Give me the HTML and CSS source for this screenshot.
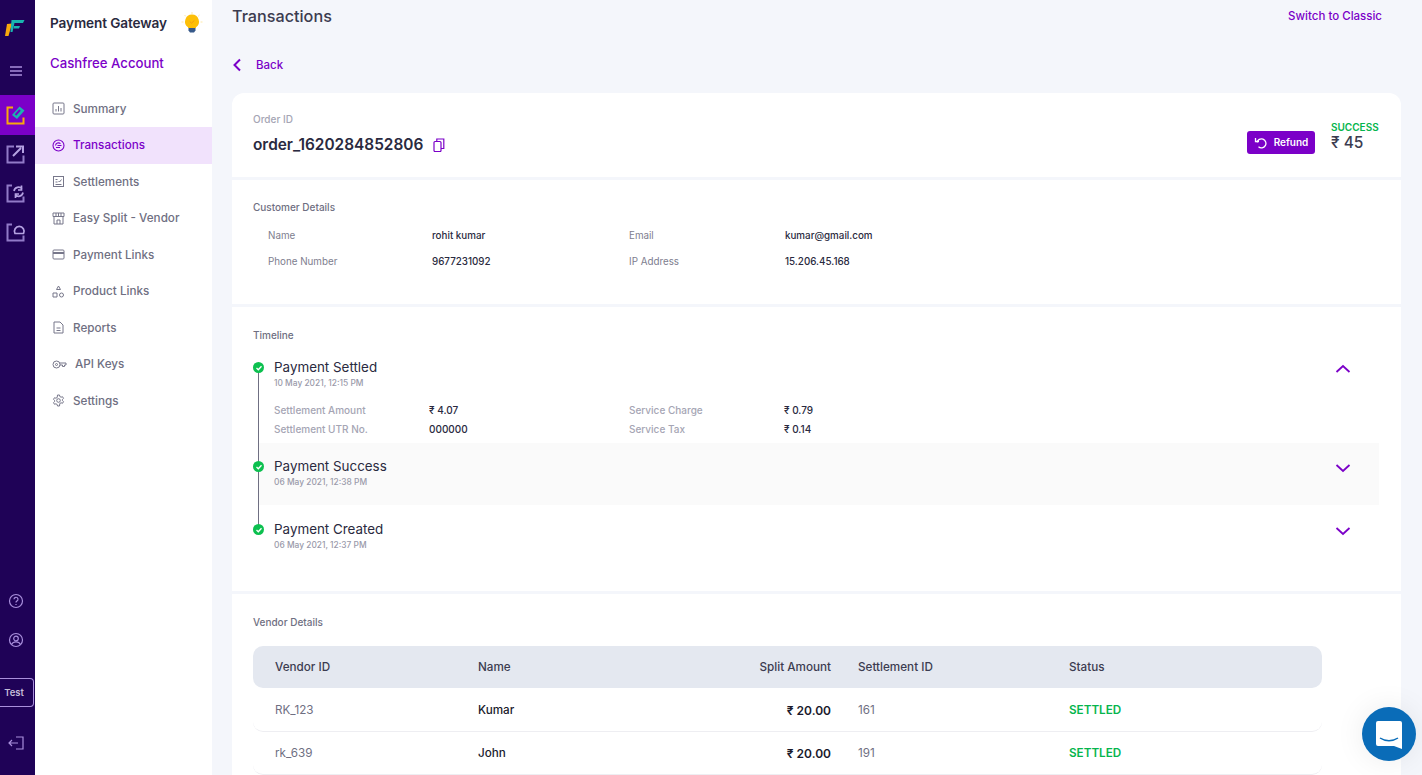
FILE: index.html
```html
<!DOCTYPE html>
<html lang="en">
<head>
<meta charset="utf-8">
<title>Transactions</title>
<link rel="stylesheet" href="styles.css">
</head>
<body>
<div class="app">
  <nav class="rail">
    <svg class="logo" width="22" height="20" viewBox="0 0 22 20"><path d="M0 18 2 6l5-.5L3.500 18z" fill="#f9a80d"/><path d="M6.500 2h13L18 5H9.500L7.500 14H5.500z" fill="#19b5b0"/><path d="M9 8h6l-1 2.500H8.500z" fill="#19b5b0"/></svg>
    <svg class="burger" width="14" height="12" viewBox="0 0 14 12"><path d="M1 2h12M1 6h12M1 10h12" stroke="#a98fdc" stroke-width="1.400"/></svg>
    <div class="rail-item active">
      <svg width="20" height="20" viewBox="0 0 20 20" fill="none"><path d="M7 2.500H1.500v16h16v-6" stroke="#f9a80d" stroke-width="2"/><path d="m6 10 7.500-8.500 5 4L11 14z" fill="#19b5b0"/><path d="m9.500 10 4.500-5" stroke="#7b00c8" stroke-width="2"/></svg>
    </div>
    <div class="rail-item">
      <svg width="20" height="20" viewBox="0 0 20 20" fill="none" stroke="#917ac8" stroke-width="2"><path d="M8 2.500H1.500v16h16v-7"/><path d="M7 12 15 4M10 2.500h7V9" stroke="#b5a2e2"/></svg>
    </div>
    <div class="rail-item">
      <svg width="20" height="20" viewBox="0 0 20 20" fill="none" stroke="#917ac8" stroke-width="2"><path d="M6 2.500H1.500v16h16v-5"/><path d="M8 8a4.500 4.500 0 0 1 8-2M17 9.500a4.500 4.500 0 0 1-8 2M15.500 2.500V7h-3.500M9.500 15v-4H13" stroke="#b5a2e2" stroke-width="1.700"/></svg>
    </div>
    <div class="rail-item">
      <svg width="20" height="20" viewBox="0 0 20 20" fill="none" stroke="#917ac8" stroke-width="2"><path d="M6 2.500H1.500v16h16v-5"/><path d="M9 11.500a4.800 4.800 0 1 1 8.500 0z" stroke="#b5a2e2" stroke-width="1.700"/></svg>
    </div>
    <div class="rail-bottom">
      <svg width="16" height="16" viewBox="0 0 16 16" fill="none" stroke="#a98fdc" stroke-width="1.200"><circle cx="8" cy="8" r="6.500"/><path d="M6 6.300a2 2 0 1 1 2.800 1.800c-.6.300-.8.700-.8 1.400M8 11v1"/></svg>
      <svg class="rail-user" width="16" height="16" viewBox="0 0 16 16" fill="none" stroke="#a98fdc" stroke-width="1.200"><circle cx="8" cy="8" r="6.500"/><circle cx="8" cy="6.500" r="2.300"/><path d="M3.500 12.500c1-2 2.500-2.700 4.500-2.700s3.500.7 4.500 2.700"/></svg>
      <div class="test-tag">Test</div>
      <svg class="rail-exit" width="16" height="14" viewBox="0 0 16 14" fill="none" stroke="#a98fdc" stroke-width="1.200"><path d="M8 1h7v12H8M1 7h9M4 4 1 7l3 3"/></svg>
    </div>
  </nav>

  <aside class="sidebar">
    <div class="product">
      <span>Payment Gateway</span>
      <svg width="22" height="22" viewBox="0 0 22 22"><path d="M11 0v2M3.500 3l1.400 1.400M18.500 3l-1.400 1.400M0.500 10h2M19.500 10h2" stroke="#fde9a8" stroke-width="1"/><path d="M11 2.500a7 7 0 0 0-4 12.700V16h8v-.8a7 7 0 0 0-4-12.700z" fill="#fdbf07"/><path d="M7.500 16h7v2.500L13 20.500H9l-1.500-2z" fill="#37598a"/><path d="m8.800 9.500 1.700 1.700 2.800-2.700" stroke="#f39c12" fill="none"/></svg>
    </div>
    <div class="account">Cashfree Account</div>
    <ul class="menu">
      <li class="menu-item"><svg width="13" height="13" viewBox="0 0 13 13" fill="none" stroke="#77778a"><rect x="1" y="1" width="11" height="11" rx="1"/><path d="M4 9.500V7M6.500 9.500V4M9 9.500V6"/></svg>Summary</li>
      <li class="menu-item current"><svg width="13" height="13" viewBox="0 0 13 13" fill="none" stroke="#7b00c8" stroke-width="1.100"><circle cx="6.500" cy="6.500" r="5.500"/><path d="M3.500 6.500a3 3 0 0 1 5-1.800M9.500 6.500h-4M4 8.500h4"/></svg>Transactions</li>
      <li class="menu-item"><svg width="13" height="13" viewBox="0 0 13 13" fill="none" stroke="#77778a"><rect x="1.500" y="1.500" width="10" height="10"/><path d="M3.500 4.500h2M3.500 7h2M3.500 9.500h6M6.500 6l1 1 2-2.500"/></svg>Settlements</li>
      <li class="menu-item"><svg width="13" height="13" viewBox="0 0 13 13" fill="none" stroke="#77778a"><path d="M1 1h11v3.500H1zM2 4.500V12h9V4.500M5 12V8h3v4M4 1v3.500M6.500 1v3.500M9 1v3.500"/></svg>Easy Split - Vendor</li>
      <li class="menu-item"><svg width="13" height="13" viewBox="0 0 13 13" fill="none" stroke="#77778a"><rect x="1" y="2" width="11" height="9" rx="1"/><path d="M1 5h11" stroke-width="2"/></svg>Payment Links</li>
      <li class="menu-item"><svg width="13" height="13" viewBox="0 0 13 13" fill="none" stroke="#77778a"><path d="m6.500 1 2 3.500h-4zM1 8h4v4H1z"/><circle cx="9.500" cy="10" r="2"/></svg>Product Links</li>
      <li class="menu-item"><svg width="13" height="13" viewBox="0 0 13 13" fill="none" stroke="#77778a"><path d="M2 1h6l3 3v8H2zM4.500 7h4M4.500 9.500h4"/></svg>Reports</li>
      <li class="menu-item key"><svg width="15" height="13" viewBox="0 0 15 13" fill="none" stroke="#77778a"><circle cx="4.500" cy="6.500" r="3.500"/><circle cx="4.500" cy="6.500" r="1"/><path d="M8 5h6v2h-1.500v1.500h-2V7H8"/></svg>API Keys</li>
      <li class="menu-item"><svg width="13" height="13" viewBox="0 0 13 13" fill="none" stroke="#77778a"><circle cx="6.500" cy="6.500" r="1.800"/><path d="M5.500 1h2l.3 1.500 1.300.7 1.400-.5 1 1.700-1.100 1v1.200l1.100 1-1 1.700-1.400-.5-1.300.7L7.500 12h-2l-.3-1.500-1.300-.7-1.400.5-1-1.700 1.100-1V6.400l-1.100-1 1-1.700 1.400.5 1.300-.7z"/></svg>Settings</li>
    </ul>
  </aside>

  <main class="main">
    <header class="topbar">
      <h1>Transactions</h1>
      <a class="classic">Switch to Classic</a>
    </header>
    <div class="back">
      <svg width="10" height="14" viewBox="0 0 10 14" fill="none" stroke="#7b00c8" stroke-width="2"><path d="M8 1.500 2.500 7 8 12.500"/></svg>
      <span>Back</span>
    </div>

    <div class="panel">
      <section class="section order">
        <div>
          <div class="order-label">Order ID</div>
          <div class="order-id">order_1620284852806
            <svg width="12" height="14" viewBox="0 0 12 14" fill="none" stroke="#7b00c8" stroke-width="1.200"><rect x="1" y="3.500" width="7" height="10" rx="1"/><path d="M3.800 3.500V1h7v9.500H8"/></svg>
          </div>
        </div>
        <div class="order-right">
          <button class="refund"><svg width="13" height="13" viewBox="0 0 13 13" fill="none" stroke="#fff" stroke-width="1.300"><path d="M3 6.500a4.500 4.500 0 1 1 1.500 4.300M1.500 2v3.500H5"/></svg>Refund</button>
          <div class="amount-box">
            <div class="success">SUCCESS</div>
            <div class="amount">₹ 45</div>
          </div>
        </div>
      </section>

      <section class="section customer">
        <div class="section-title">Customer Details</div>
        <dl class="details">
          <dt>Name</dt><dd>rohit kumar</dd><dt>Email</dt><dd>kumar@gmail.com</dd>
          <dt>Phone Number</dt><dd>9677231092</dd><dt>IP Address</dt><dd>15.206.45.168</dd>
        </dl>
      </section>

      <section class="section timeline">
        <div class="section-title">Timeline</div>
        <div class="steps">
          <div class="step first">
            <div class="step-head">
              <span class="dot"><svg width="8" height="8" viewBox="0 0 8 8" fill="none" stroke="#fff" stroke-width="1.300"><path d="m1.500 4 1.800 1.800 3.200-3.500"/></svg></span>
              <div><div class="step-title">Payment Settled</div><div class="step-date">10 May 2021, 12:15 PM</div></div>
              <svg class="chev" width="16" height="10" viewBox="0 0 16 10" fill="none" stroke="#7b00c8" stroke-width="1.800"><path d="m1.500 8 6.500-6 6.500 6"/></svg>
            </div>
            <dl class="step-details">
              <dt>Settlement Amount</dt><dd>₹ 4.07</dd><dt>Service Charge</dt><dd>₹ 0.79</dd>
              <dt>Settlement UTR No.</dt><dd>000000</dd><dt>Service Tax</dt><dd>₹ 0.14</dd>
            </dl>
          </div>
          <div class="step shaded">
            <div class="step-head">
              <span class="dot"><svg width="8" height="8" viewBox="0 0 8 8" fill="none" stroke="#fff" stroke-width="1.300"><path d="m1.500 4 1.800 1.800 3.200-3.500"/></svg></span>
              <div><div class="step-title">Payment Success</div><div class="step-date">06 May 2021, 12:38 PM</div></div>
              <svg class="chev" width="16" height="10" viewBox="0 0 16 10" fill="none" stroke="#7b00c8" stroke-width="1.800"><path d="m1.500 2 6.500 6 6.500-6"/></svg>
            </div>
          </div>
          <div class="step last">
            <div class="step-head">
              <span class="dot"><svg width="8" height="8" viewBox="0 0 8 8" fill="none" stroke="#fff" stroke-width="1.300"><path d="m1.500 4 1.800 1.800 3.200-3.500"/></svg></span>
              <div><div class="step-title">Payment Created</div><div class="step-date">06 May 2021, 12:37 PM</div></div>
              <svg class="chev" width="16" height="10" viewBox="0 0 16 10" fill="none" stroke="#7b00c8" stroke-width="1.800"><path d="m1.500 2 6.500 6 6.500-6"/></svg>
            </div>
          </div>
        </div>
      </section>

      <section class="section vendor">
        <div class="section-title">Vendor Details</div>
        <div class="vendor-table">
          <div class="vrow vhead"><span>Vendor ID</span><span>Name</span><span class="right">Split Amount</span><span>Settlement ID</span><span>Status</span></div>
          <div class="vrow"><span class="muted">RK_123</span><span class="strong">Kumar</span><span class="right strong amt">₹ 20.00</span><span class="muted">161</span><span class="settled">SETTLED</span></div>
          <div class="vrow"><span class="muted">rk_639</span><span class="strong">John</span><span class="right strong amt">₹ 20.00</span><span class="muted">191</span><span class="settled">SETTLED</span></div>
        </div>
      </section>
    </div>
  </main>
</div>
<div class="chat">
  <svg width="28" height="30" viewBox="0 0 28 30"><path d="M3 1h22a2 2 0 0 1 2 2v26l-8-3H3a2 2 0 0 1-2-2V3a2 2 0 0 1 2-2z" fill="#fff"/><path d="M5 18c5 3.500 13 3.500 18 0" fill="none" stroke="#0a6cb8" stroke-width="1.500"/></svg>
</div>
</body>
</html>
```

FILE: styles.css
```css
* { box-sizing: border-box; }
html, body { margin: 0; height: 775px; overflow: hidden; }
body { font-family: Inter, "Noto Sans", sans-serif; color: #2a2a40; background: #f4f6fb; }
.app { display: flex; height: 775px; overflow: hidden; }

.rail { width: 35px; flex: none; background: #1f0257; display: flex; flex-direction: column; align-items: center; }
.logo { margin: 18px 4px 0 0; }
.burger { margin: 27px 4px 0 0; }
.rail-item { width: 35px; height: 40px; display: flex; align-items: center; justify-content: center; flex: none; margin-bottom: -1px; }
.rail-item svg { margin-right: 3px; }
.rail-item.active { background: #7b00c8; margin-top: 18px; }
.rail-bottom { margin-top: auto; display: flex; flex-direction: column; align-items: center; padding-bottom: 25px; }
.rail-bottom > svg { margin-right: 4px; }
.rail-bottom > .rail-user { margin-top: 23px; }
.test-tag { width: 34px; height: 29px; margin: 30px 0 0 -2px; border: 1px solid #a98fdc; border-left: 0; border-radius: 0 4px 4px 0; color: #c4bcd8; font-size: 9.500px; font-weight: 600; display: flex; align-items: center; justify-content: center; padding-right: 4px; }
.rail-bottom > .rail-exit { margin-top: 29px; }

.sidebar { width: 177px; flex: none; background: #fff; }
.product { display: flex; justify-content: space-between; align-items: center; height: 22px; margin: 12px 9px 0 15px; font-size: 13.600px; font-weight: 600; color: #2a2a40; letter-spacing: -.1px; }
.account { margin: 18px 0 0 15px; font-size: 13.200px; font-weight: 500; color: #7b00c8; line-height: 22px; }
.menu { list-style: none; margin: 16.700px 0 0; padding: 0; }
.menu-item { height: 36.500px; padding-left: 17px; display: flex; align-items: center; gap: 8px; font-size: 11.700px; font-weight: 500; color: #6f6f82; }
.menu-item.current { background: #f1e2fc; color: #7b00c8; }

.main { flex: 1; min-width: 0; padding: 0 21px 0 20px; }
.topbar { display: flex; justify-content: space-between; align-items: center; height: 32px; padding-right: 19px; }
.topbar h1 { margin: 0; font-size: 16.200px; font-weight: 500; color: #3c3c50; }
.classic { font-size: 11.500px; font-weight: 500; color: #7b00c8; }
.back { display: flex; align-items: center; gap: 14px; height: 18px; margin-top: 24px; font-size: 11.500px; font-weight: 500; color: #7b00c8; }
.panel { margin-top: 19px; border-radius: 12px 12px 0 0; overflow: hidden; display: flex; flex-direction: column; gap: 3px; }
.section { background: #fff; padding-left: 21px; }
.section-title { font-size: 10px; font-weight: 500; color: #6f6f82; line-height: 14px; }

.order { height: 84px; display: flex; justify-content: space-between; padding-top: 20px; }
.order-label { font-size: 10px; font-weight: 500; color: #a5a5b4; line-height: 13px; }
.order-id { display: flex; align-items: center; gap: 10px; margin-top: 8px; font-size: 15.400px; font-weight: 600; color: #2a2a40; line-height: 22px; }
.order-right { display: flex; align-items: flex-start; gap: 16px; padding-right: 22px; }
.refund { width: 68px; height: 23px; margin-top: 18px; padding: 0 0 1px; border: 0; border-radius: 3px; background: #7b00c8; color: #fff; font: 600 10px Inter, sans-serif; display: flex; align-items: center; justify-content: center; gap: 7px; }
.amount-box { width: 48px; }
.success { font-size: 10px; font-weight: 600; color: #05b54d; line-height: 13px; margin-top: 7.500px; }
.amount { font-size: 15.500px; font-weight: 500; color: #3c3c50; line-height: 20px; margin-top: -1px; }

.customer { height: 124px; padding-top: 20px; }
.details { display: grid; grid-template-columns: 164px 197px 156px 1fr; margin: 15px 0 0 15px; row-gap: 12px; }
dt, dd { margin: 0; }
.details dt, .details dd { line-height: 14px; font-size: 9.800px; }
.details dt { color: #7d7d8e; font-weight: 400; }
.details dd { color: #2a2a40; font-weight: 500; }

.timeline { height: 284px; padding-top: 21px; }
.steps { position: relative; margin: 15px 22px 0 0; }
.steps::before { content: ""; position: absolute; left: 4.500px; top: 14px; height: 158px; width: 1px; background: #6f6f82; }
.step-head { display: flex; align-items: flex-start; position: relative; }
.dot { position: relative; z-index: 1; width: 11px; height: 11px; border-radius: 50%; background: #0cc04f; margin: 5px 10px 0 0; display: flex; align-items: center; justify-content: center; flex: none; }
.step-title { font-size: 13.400px; font-weight: 400; color: #2a2a40; line-height: 20px; }
.step-date { font-size: 8.400px; color: #9a9aaa; font-weight: 500; line-height: 13px; }
.chev { margin: 7px 28px 0 auto; }
.step-details { display: grid; grid-template-columns: 155px 200px 155px 1fr; margin: 13px 0 0 21px; row-gap: 5px; }
.step-details dt, .step-details dd { font-size: 10px; line-height: 14px; }
.step-details dt { color: #a5a5b4; font-weight: 500; }
.step-details dd { color: #2a2a40; font-weight: 500; }
.first { height: 86px; }
.shaded { margin-left: 6px; height: 62px; padding-top: 13px; background: #fafafa; }
.shaded .dot { margin-left: -6px; }
.last { height: 60px; padding-top: 14px; }

.vendor { height: 200px; padding-top: 21px; }
.vendor-table { width: 1069px; margin-top: 17px; font-size: 11.700px; }
.vrow { display: grid; grid-template-columns: 203px 202px 151px 27px 211px 1fr; height: 43px; align-items: center; padding-left: 22px; border-bottom: 1px solid #eeeef2; border-radius: 10px; }
.vrow span:nth-child(3) { grid-column: 3; }
.vrow span:nth-child(4) { grid-column: 5; }
.vrow span:nth-child(5) { grid-column: 6; }
.vhead { height: 42px; margin-bottom: 1px; background: #e4e8f0; border: 0; font-weight: 500; color: #3c3c50; }
.right { text-align: right; }
.muted { color: #6f6f82; }
.strong { color: #1a1a2c; font-weight: 500; }
.amt { font-weight: 600; font-size: 12px; }
.settled { color: #05b54d; font-weight: 600; }

.chat { position: fixed; left: 1362px; top: 707px; width: 54px; height: 54px; border-radius: 50%; background: #0a6cb8; display: flex; align-items: center; justify-content: center; box-shadow: 0 0 30px rgba(0,0,0,.08); padding-top: 2px; }
```
